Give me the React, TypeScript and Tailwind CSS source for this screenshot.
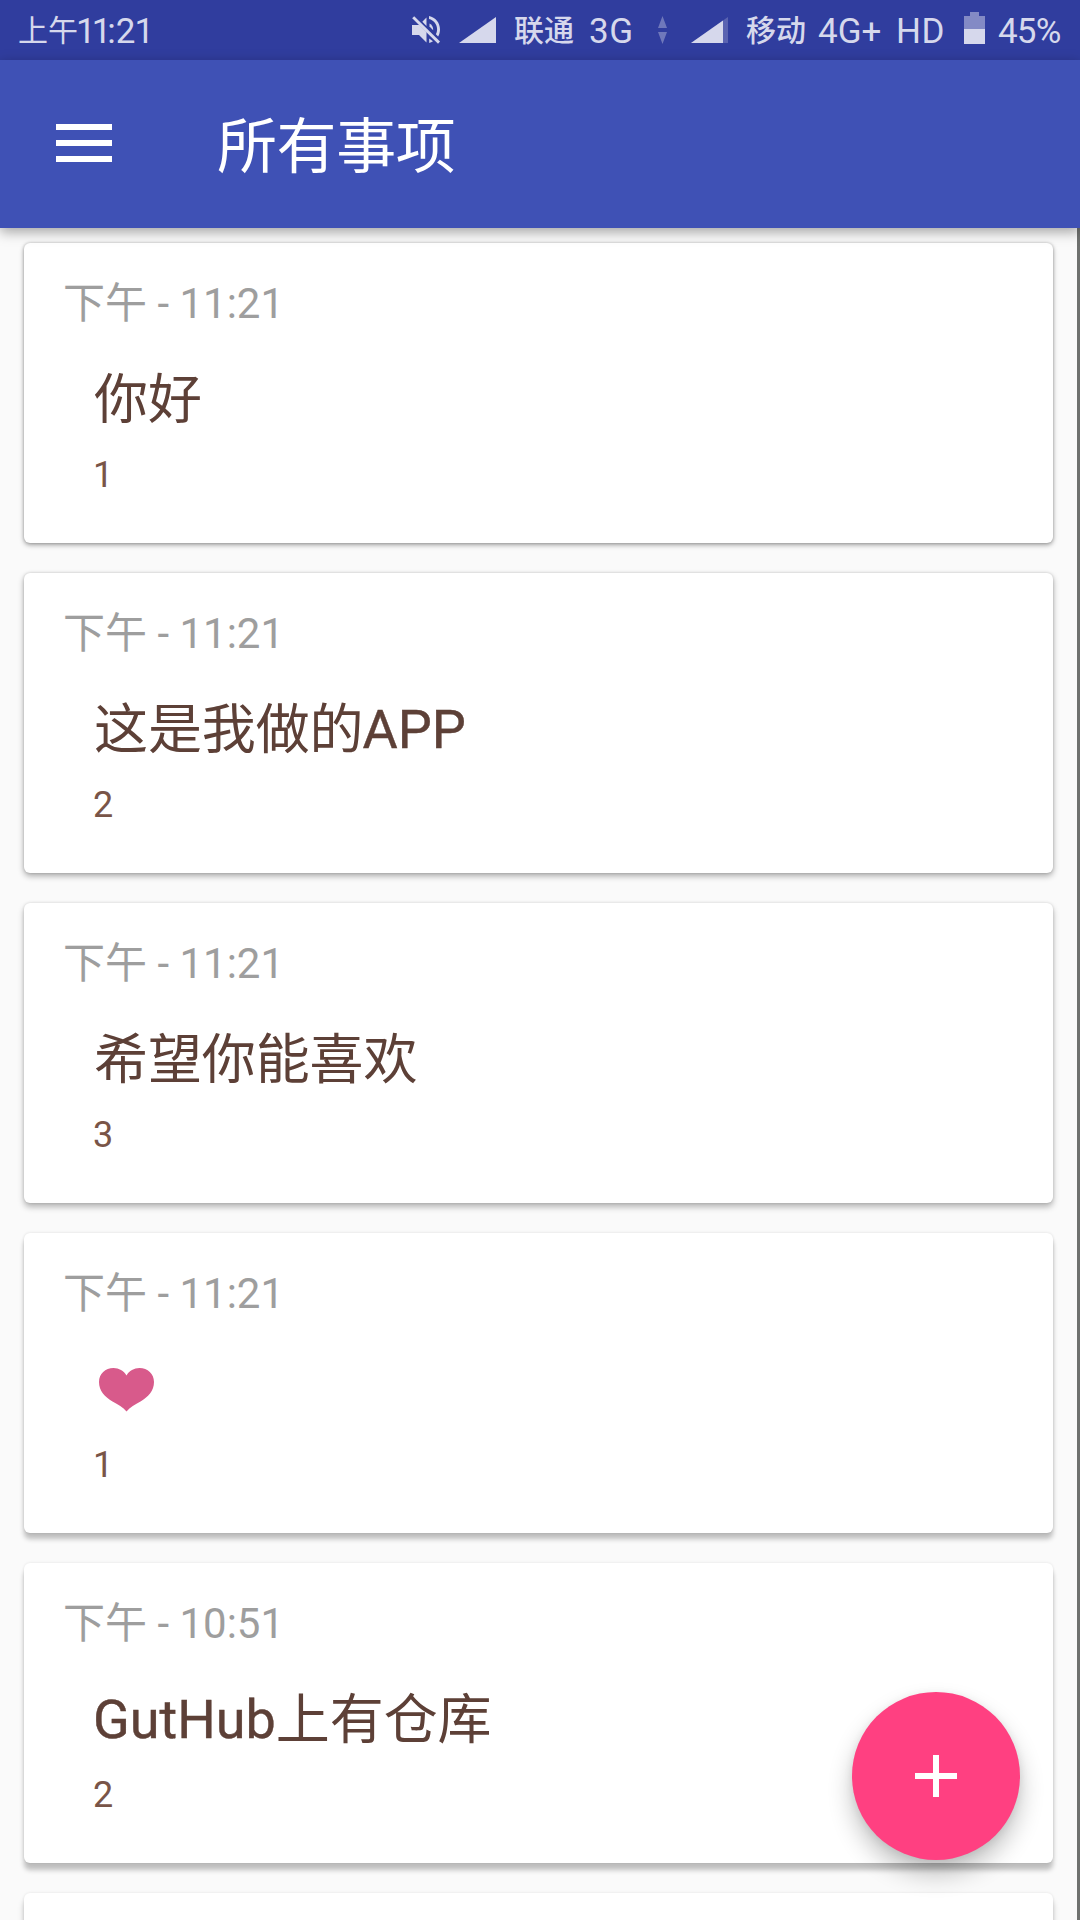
type Item = { time: string; title: [string, string][]; count: string; shadow: string };

const items: Item[] = [
  { time: "下午 - 11:21", title: [["cjk", "你好"]], count: "1", shadow: "shadow-[0_2px_5px_rgba(0,0,0,0.36),0_0_3px_rgba(0,0,0,0.18)]" },
  { time: "下午 - 11:21", title: [["cjk", "这是我做的"], ["latin", "APP"]], count: "2", shadow: "shadow-[0_3px_6px_rgba(0,0,0,0.32),0_0_3px_rgba(0,0,0,0.16)]" },
  { time: "下午 - 11:21", title: [["cjk", "希望你能喜欢"]], count: "3", shadow: "shadow-[0_4px_6px_rgba(0,0,0,0.28),0_0_3px_rgba(0,0,0,0.14)]" },
  { time: "下午 - 11:21", title: [["heart", "❤"]], count: "1", shadow: "shadow-[0_6px_5px_rgba(0,0,0,0.24),0_0_3px_rgba(0,0,0,0.12)]" },
  { time: "下午 - 10:51", title: [["latin", "GutHub"], ["cjk", "上有仓库"]], count: "2", shadow: "shadow-[0_7px_5px_rgba(0,0,0,0.24),0_0_3px_rgba(0,0,0,0.1)]" },
  { time: "", title: [], count: "", shadow: "shadow-[0_7px_6px_rgba(0,0,0,0.22),0_0_3px_rgba(0,0,0,0.1)]" },
];

function StatusBar() {
  return (
    <div className="flex h-[60px] shrink-0 items-center bg-[#303d9e] pl-[18px] leading-[56px] whitespace-nowrap text-[#d6d8ec]">
      <span className="w-[58px] pt-[2px] text-[30px]">上午</span>
      <span className="w-[336px] pt-[4px] text-[35px]">
        <span className="tracking-[-4px]">11</span>
        <span className="tracking-[0px]">:</span>
        <span className="tracking-[-1px]">21</span>
      </span>
      <svg className="h-7 w-7 shrink-0" viewBox="0 0 28 28" fill="currentColor">
        <path d="M0 9h7.500l7 7v10.500L7 19H0z" />
        <path d="M14.500 1.500v8.500l-4.200-4.200z" />
        <path d="M17.500 7.500c2.300 1.200 3.800 3.500 3.700 6.800l-3.700-3.700z" />
        <path d="M17 0c6.500 1.300 11 6.800 11 13.500 0 2.500-.6 5-1.900 7l-2.200-2.300c.8-1.400 1.200-3 1.200-4.700 0-5-3.300-9.200-8.100-10.400z" />
        <path d="M17.200 22.500l3.800 2.700c-1.200.9-2.500 1.500-3.800 1.800z" />
        <path d="M.2 2.300 2.200.2 28 25.600l-2 2.200z" />
      </svg>
      <svg className="ml-[19px] h-[26px] w-[37px] shrink-0" viewBox="0 0 37 26" fill="currentColor">
        <path d="M37 0v26H0z" />
      </svg>
      <span className="ml-[18px] w-[75px] pt-[2px] text-[30px] font-medium">联通</span>
      <span className="w-[69px] pt-[4px] text-[35px] tracking-[0.5px]">3G</span>
      <svg className="h-7 w-[9px] shrink-0 text-[#6f78bb]" viewBox="0 0 9 28" fill="currentColor">
        <path d="M4.500 0 9 12H0zM0 16h9L4.500 28z" />
      </svg>
      <svg className="ml-6 h-[26px] w-[37px] shrink-0" viewBox="0 0 37 26" fill="currentColor">
        <path d="M37 0v26H0z" opacity="0.25" />
        <path d="M32 3.500V26H0z" />
      </svg>
      <span className="ml-[18px] w-[72px] pt-[2px] text-[30px] font-medium">移动</span>
      <span className="w-[78px] pt-[4px] text-[35px]">4G+</span>
      <span className="w-[68px] pt-[4px] text-[35px] tracking-[0.5px]">HD</span>
      <svg className="mb-1 h-8 w-[21px] shrink-0" viewBox="0 0 21 32" fill="currentColor">
        <path d="M6 0h9v4h6v13H0V4h6z" opacity="0.5" />
        <path d="M0 17h21v15H0z" />
      </svg>
      <span className="ml-[13px] pt-[4px] text-[35px] tracking-[-0.8px]">45%</span>
    </div>
  );
}

function Heart() {
  return (
    <svg className="ml-[5px] h-[44px] w-[55px]" viewBox="0 0 55 44" fill="#d85a8b" role="img" aria-label="❤">
      <path d="M27.500 7.500C24.700 2.800 20 0 14.500 0 6.300 0 0 5.800 0 14c0 9 6 15 13.500 19.500 5.500 3.400 10.500 5.500 14 10 3.500-4.500 8.500-6.600 14-10C49 29 55 23 55 14 55 5.800 48.700 0 40.500 0c-5.500 0-10.200 2.800-13 7.500z" />
    </svg>
  );
}

function TitlePart({ kind, text }: { kind: string; text: string }) {
  if (kind === "heart") return <Heart />;
  if (kind === "latin") return <span className="-ml-px [-webkit-text-stroke:0.4px_#5d4037]">{text}</span>;
  return <span className="pt-[2px] tracking-[-0.1px]">{text}</span>;
}

function Card({ item }: { item: Item }) {
  return (
    <article className={`h-[300px] w-[1029px] shrink-0 rounded-[6px] bg-white pt-[36px] pl-[39px] ${item.shadow}`}>
      <div className="h-[50px] text-[42px] leading-[50px] text-[#9e9e9e]">{item.time}</div>
      <div className="mt-[39px] ml-[31px] flex h-[64px] items-center text-[54px] leading-[64px] text-[#5d4037]">
        {item.title.map(([kind, text]) => (
          <TitlePart key={text} kind={kind} text={text} />
        ))}
      </div>
      <div className="mt-[21px] ml-[30px] h-[44px] text-[36px] leading-[44px] text-[#795548]">{item.count}</div>
    </article>
  );
}

export default function App() {
  return (
    <div className="relative flex h-[1920px] w-[1080px] flex-col overflow-hidden bg-[#fafafa] font-['Roboto','Noto_Sans_CJK_SC',sans-serif]">
      <StatusBar />
      <header className="z-10 flex h-[168px] shrink-0 items-center bg-[#3f51b5] pl-14 text-white shadow-[0_4px_12px_rgba(0,0,0,0.35)]">
        <svg className="mb-[2px] h-[38px] w-14" viewBox="0 0 56 38" fill="currentColor">
          <path d="M0 0h56v6H0zM0 16h56v6H0zM0 32h56v6H0z" />
        </svg>
        <h1 className="ml-[105px] pt-[8px] text-[60px] leading-[72px] font-normal tracking-[-0.4px]">所有事项</h1>
      </header>
      <div className="flex min-h-0 flex-1 justify-between pl-6">
        <main className="flex flex-col gap-[30px] pt-[15px]">
          {items.map((item, i) => (
            <Card key={i} item={item} />
          ))}
        </main>
        <div className="w-[3px] bg-[#6f716f]" />
      </div>
      <button
        aria-label="+"
        className="absolute right-[60px] bottom-[60px] z-20 flex h-[168px] w-[168px] items-center justify-center rounded-full bg-[#ff4081] text-white shadow-[0_14px_24px_rgba(0,0,0,0.24),0_2px_8px_rgba(0,0,0,0.08)]"
      >
        <svg className="h-[42px] w-[42px]" viewBox="0 0 42 42" fill="currentColor">
          <path d="M18 0h6v18h18v6H24v18h-6V24H0v-6h18z" />
        </svg>
      </button>
    </div>
  );
}
